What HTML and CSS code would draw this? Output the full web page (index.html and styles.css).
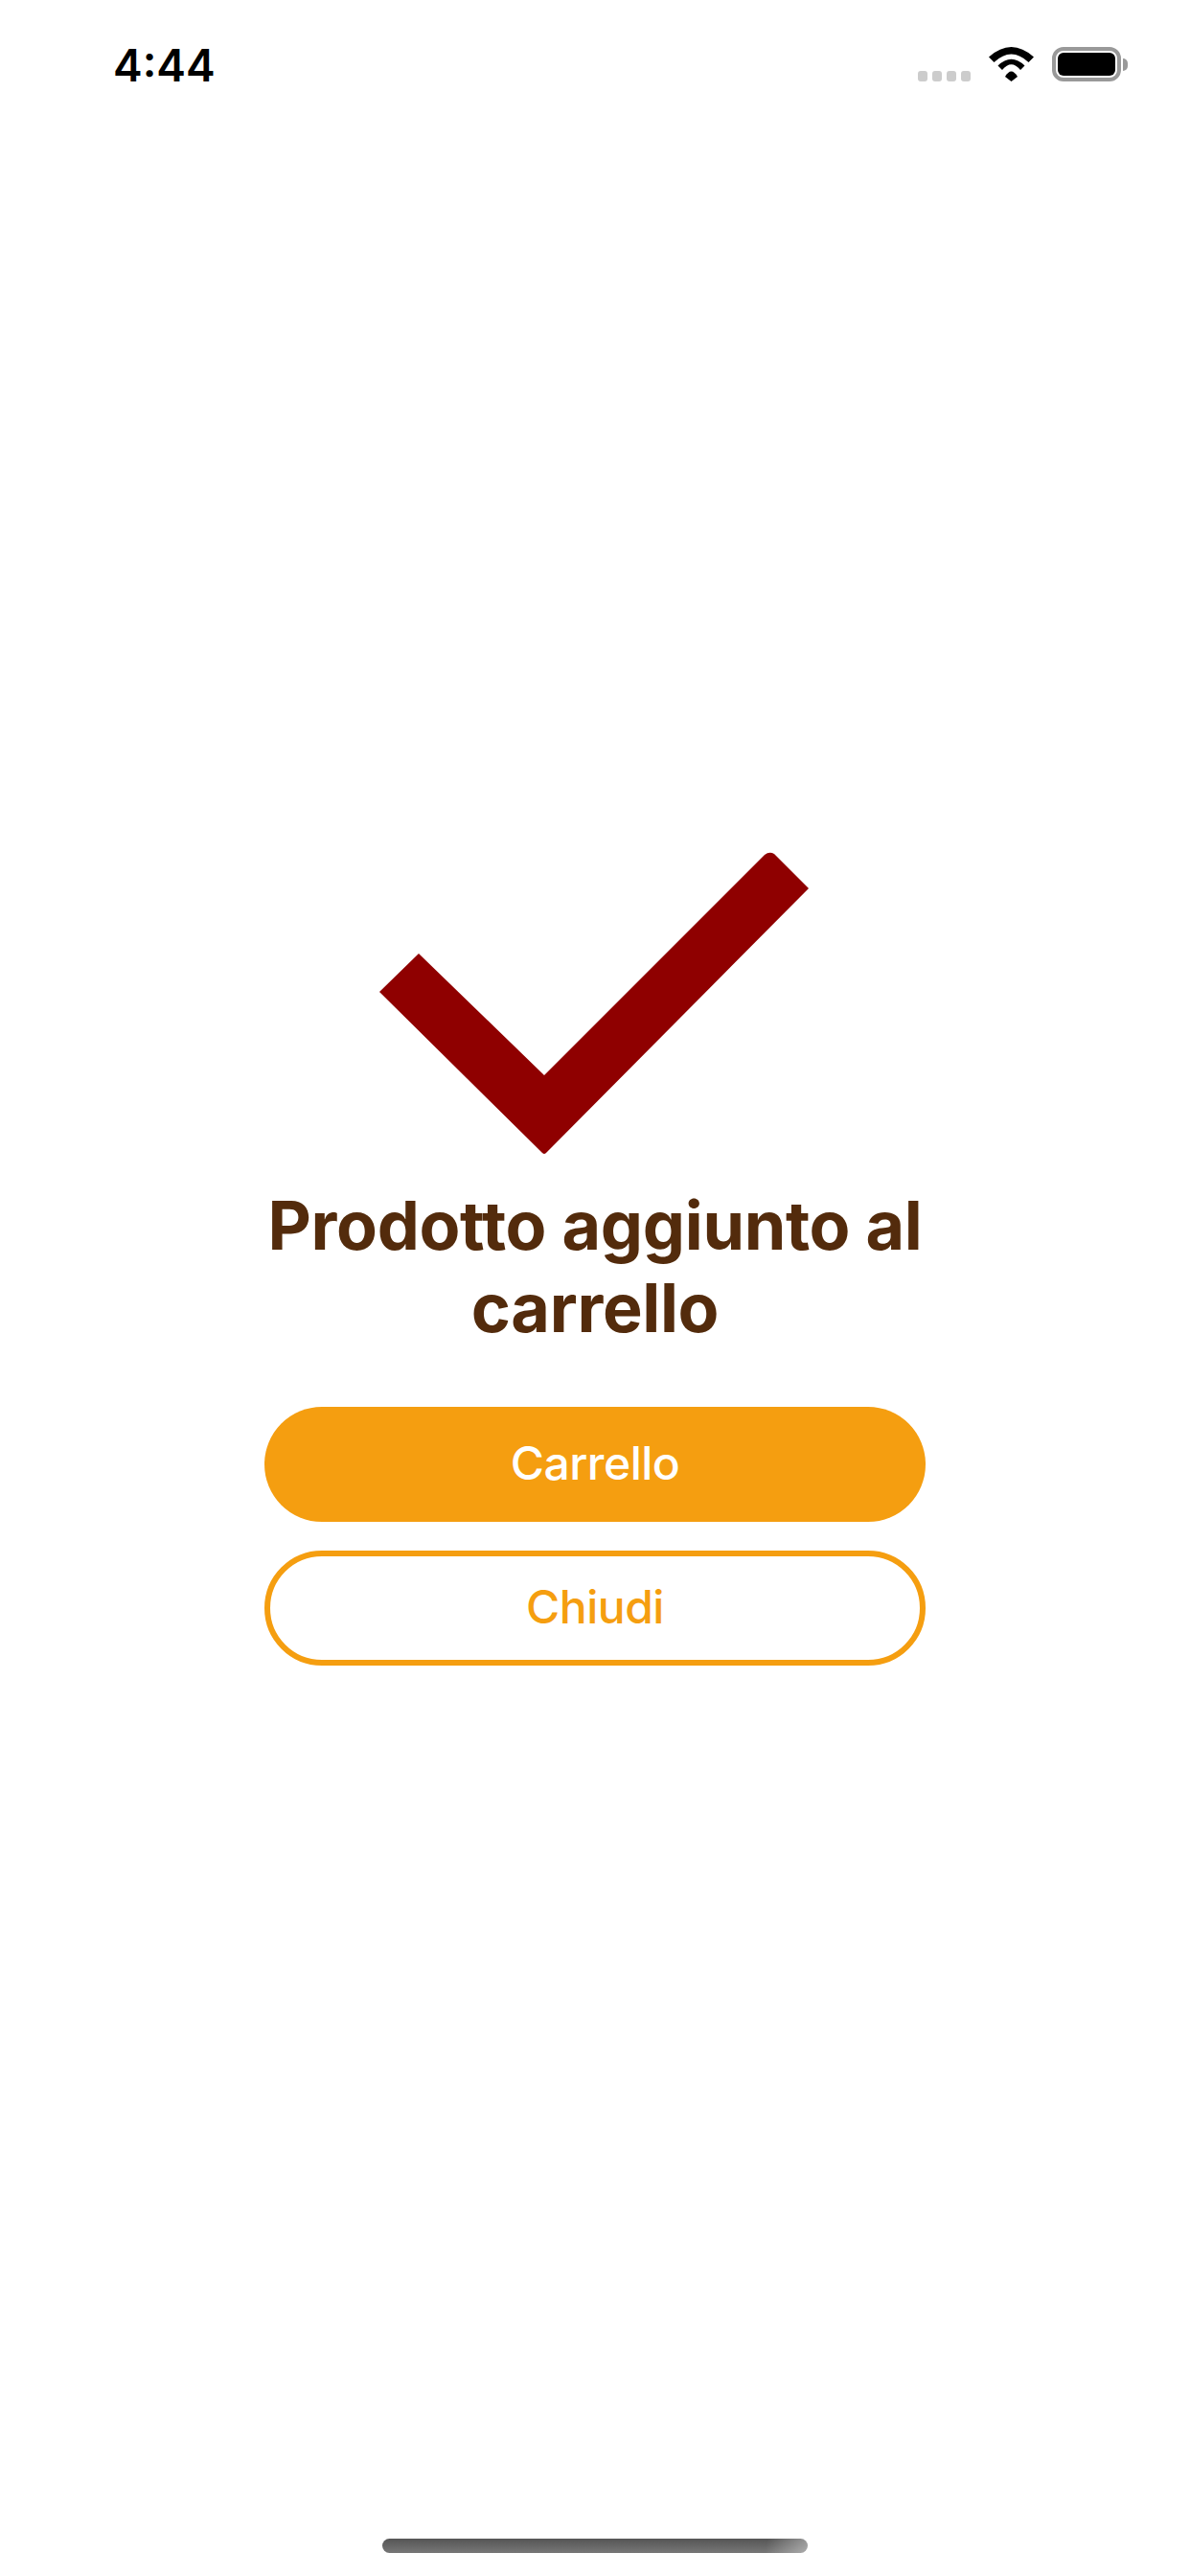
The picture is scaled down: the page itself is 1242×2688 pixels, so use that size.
FILE: index.html
```html
<!DOCTYPE html>
<html lang="it">
<head>
	<meta charset="UTF-8">
	<title>Prodotto aggiunto al carrello</title>
	<link rel="stylesheet" href="styles.css">
</head>
<body>
	<div class="status-bar">
		<div class="status-time">4:44</div>
		<div class="status-icons">
			<div class="signal">
				<span></span>
				<span></span>
				<span></span>
				<span></span>
			</div>
			<svg class="wifi" width="47" height="36" viewBox="0 0 47 36">
				<path d="M0 10.5Q23.5 -10.5 47 10.5L41.5 16Q23.5 -1 5.5 16Z"/>
				<path d="M9.5 19.5Q23.5 6 37.5 19.5L33 24Q23.5 12.5 14 24Z"/>
				<path d="M17 31Q23.5 20 30 31L23.5 36Z"/>
			</svg>
			<div class="battery">
				<div class="battery-body"><span></span></div>
				<div class="battery-cap"></div>
			</div>
		</div>
	</div>

	<div class="confirm">
		<svg class="check" width="450" height="318" viewBox="0 0 450 318">
			<path d="M0 147L41 107L172 234L402 4Q407 0 412 3L448 39L174 315Q172 317 170 315Z"/>
		</svg>
		<h1 class="confirm-title">Prodotto aggiunto al carrello</h1>
		<a class="btn btn-fill">Carrello</a>
		<a class="btn btn-line">Chiudi</a>
	</div>

	<div class="home-bar"></div>
</body>
</html>
```

FILE: styles.css
```css
*{
	margin: 0;
	padding: 0;
	box-sizing: border-box;
}
body{
	width: 1242px;
	height: 2688px;
	background-color: #FFF;
	font-family: "Inter", "Liberation Sans", sans-serif;
	display: flex;
	flex-direction: column;
	overflow: hidden;
}
.status-bar{
	height: 100px;
	padding: 49px 65px 0 118px;
	display: flex;
	justify-content: space-between;
	align-items: flex-start;
}
.status-time{
	margin-top: 1px;
	font-size: 46px;
	font-weight: 600;
	line-height: 36px;
	color: #000;
}
.status-icons{
	display: flex;
	align-items: flex-end;
}
.signal{
	display: flex;
	gap: 5px;
	margin-right: 19px;
}
.signal span{
	width: 10px;
	height: 11px;
	background-color: #CCC;
	border-radius: 3px;
}
.wifi{
	fill: #000;
	margin-right: 19px;
}
.battery{
	display: flex;
	align-items: center;
}
.battery-body{
	width: 72px;
	height: 36px;
	padding: 2px;
	border: 4px solid #999;
	border-radius: 12px;
}
.battery-body span{
	display: block;
	height: 100%;
	background-color: #000;
	border-radius: 6px;
}
.battery-cap{
	width: 5px;
	height: 13px;
	margin-left: 2px;
	background-color: #999;
	border-radius: 0 5px 5px 0;
}
.confirm{
	margin-top: 788px;
	display: flex;
	flex-direction: column;
	align-items: center;
}
.check{
	fill: #8F0000;
}
.confirm-title{
	width: 690px;
	margin-top: 30px;
	font-size: 70px;
	font-weight: 700;
	letter-spacing: -0.3px;
	line-height: 86px;
	text-align: center;
	color: #532B0C;
}
.btn{
	width: 690px;
	height: 120px;
	padding-bottom: 3px;
	border-radius: 60px;
	font-size: 48px;
	font-weight: 500;
	letter-spacing: -0.5px;
	display: flex;
	justify-content: center;
	align-items: center;
}
.btn-fill{
	margin-top: 60px;
	background-color: #F59E10;
	color: #FFF;
}
.btn-line{
	margin-top: 30px;
	border: 6px solid #F59E10;
	color: #F59E10;
}
.home-bar{
	width: 444px;
	height: 15px;
	margin: auto auto 24px;
	border-radius: 8px;
	background: linear-gradient(100deg, rgba(255,255,255,0) 90%, rgba(255,255,255,0.4) 100%), linear-gradient(#555, #777);
}
```
